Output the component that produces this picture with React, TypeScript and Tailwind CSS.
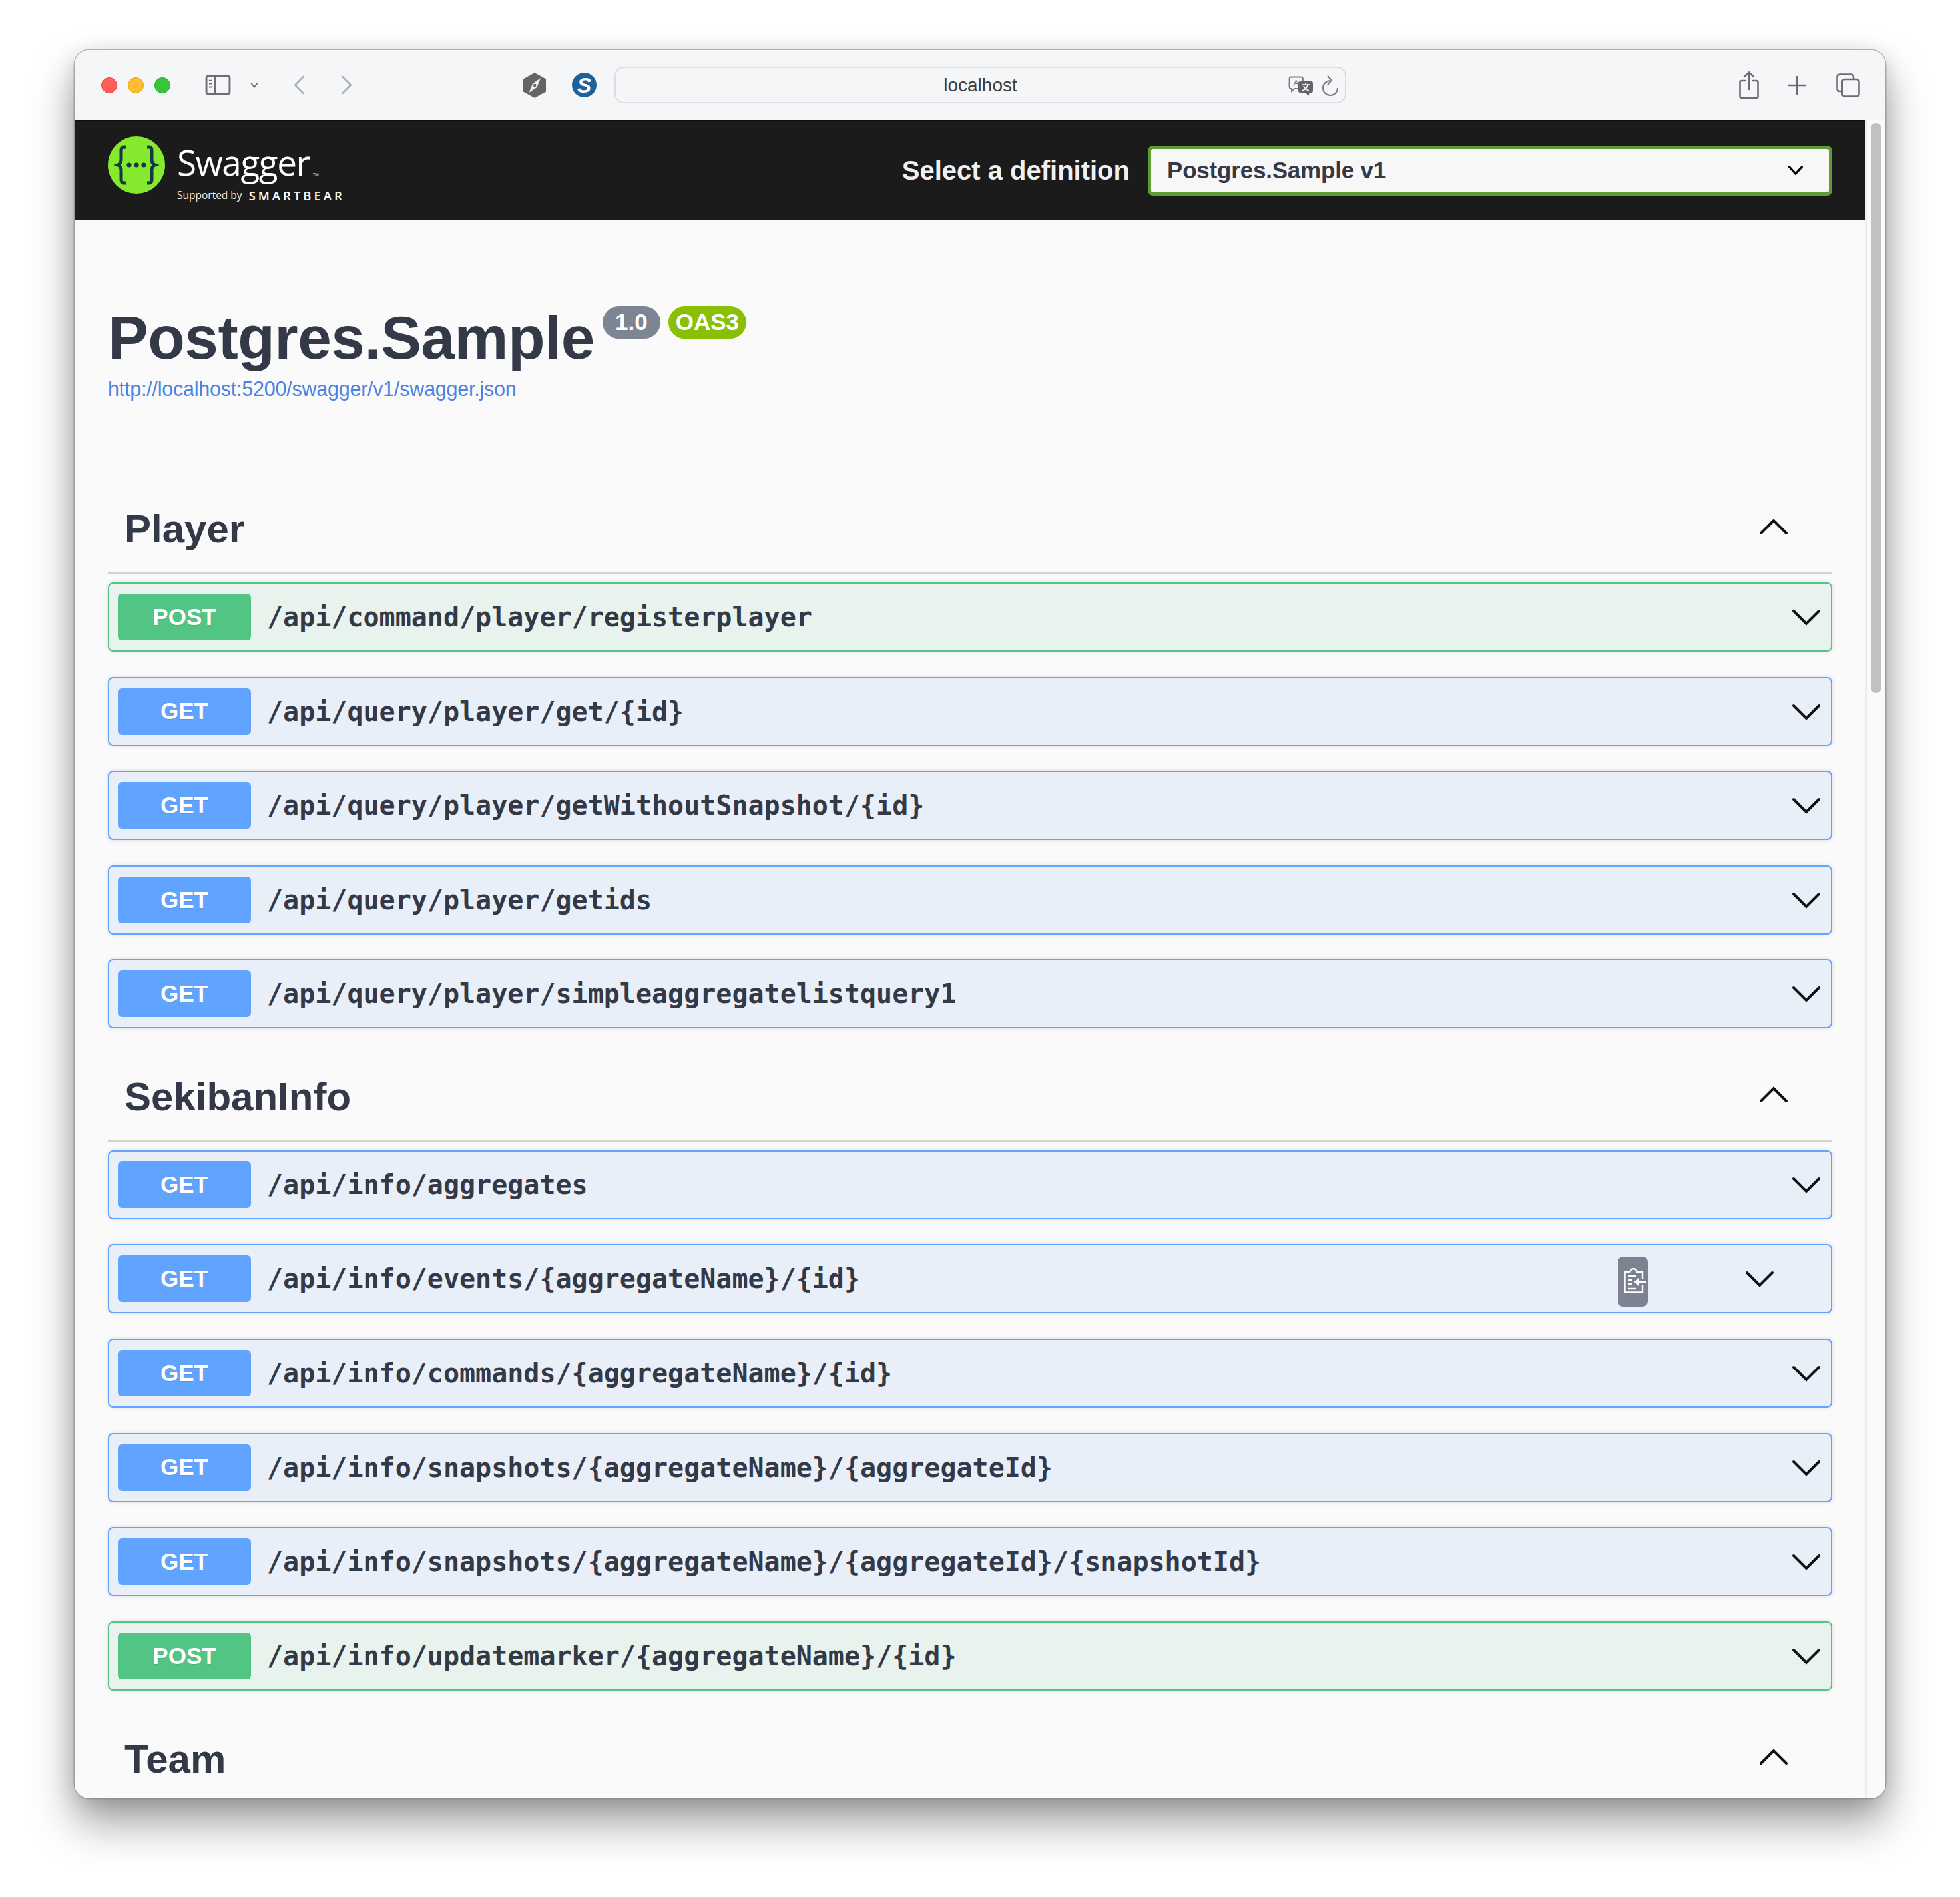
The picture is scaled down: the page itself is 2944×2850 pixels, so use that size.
import React from "react";

type Method = "GET" | "POST";

function Chevron({ className }: { className?: string }) {
  return (
    <svg viewBox="0 0 44 28" className={className} fill="none" stroke="#111" strokeWidth="4" strokeLinecap="round">
      <path d="M3 4 L22 23 L41 4" />
    </svg>
  );
}

function ChevronUp({ className }: { className?: string }) {
  return (
    <svg viewBox="0 0 44 28" className={className} fill="none" stroke="#111" strokeWidth="4" strokeLinecap="round">
      <path d="M3 24 L22 5 L41 24" />
    </svg>
  );
}

function CopyIcon() {
  return (
    <div className="absolute left-[2266px] top-[17px] flex h-[75px] w-[45px] items-center justify-center rounded-[8px] bg-[#7d8293]">
      <svg viewBox="0 0 33 38" className="mb-[3px] ml-[6px] h-[38px] w-[33px] shrink-0" fill="none" stroke="#fff" strokeWidth="2.4">
        <path d="M28 25 V36.5 H1.5 V6 H9 L10.5 3 Q14.5 -1 18.5 3 L20 6 H28 V17" />
        <path d="M6 12 H18 M6 18 H12 M6 24 H12 M6 31 H18" />
        <path d="M33 21 H22" strokeWidth="4" />
        <path d="M23 15 L15.5 21 L23 27 Z" fill="#fff" stroke="none" />
      </svg>
    </div>
  );
}

function Row({ method, path, copy }: { method: Method; path: string; copy?: boolean }) {
  const post = method === "POST";
  return (
    <div
      className={
        "relative flex h-[104px] items-center rounded-[8px] border-2 pl-[13px] shadow-[0_0_6px_rgba(0,0,0,0.13)] " +
        (post ? "border-[#52c584] bg-[#e9f3ee]" : "border-[#60a4ff] bg-[#e8eff9]")
      }
    >
      <div
        className={
          "flex h-[70px] w-[200px] items-center justify-center rounded-[6px] text-[35px] font-bold text-white [text-shadow:0_1px_0_rgba(0,0,0,0.1)] " +
          (post ? "bg-[#52c584]" : "bg-[#60a4ff]")
        }
      >
        {method}
      </div>
      <div className="ml-[24px] font-['DejaVu_Sans_Mono',monospace] text-[40px] font-bold text-[#343947]">{path}</div>
      {copy && <CopyIcon />}
      <Chevron className={"absolute top-[37px] h-[28px] w-[44px] " + (copy ? "right-[85px]" : "right-[15px]")} />
    </div>
  );
}

function Section({ title, rows }: { title: string; rows?: { m: Method; p: string; copy?: boolean }[] }) {
  return (
    <section>
      <div className="flex h-[114px] items-center justify-between border-b-2 border-[#d0d1d5] pb-[18px] pl-[25px] pr-[66px]">
        <h2 className="text-[60px] font-bold leading-none text-[#343947]">{title}</h2>
        <ChevronUp className="mb-[8px] h-[28px] w-[44px]" />
      </div>
      {rows && (
        <div className="mt-[13px] flex flex-col gap-[37.6px]">
          {rows.map((r) => (
            <Row key={r.p} method={r.m} path={r.p} copy={r.copy} />
          ))}
        </div>
      )}
    </section>
  );
}

function Toolbar() {
  return (
    <div className="flex h-[105px] items-center bg-[#f5f6f8] pr-[38px]">
      <div className="ml-[40px] flex gap-[16px]">
        <div className="h-[24px] w-[24px] rounded-full border border-[#e0443e] bg-[#ff5f57]" />
        <div className="h-[24px] w-[24px] rounded-full border border-[#dea123] bg-[#febc2e]" />
        <div className="h-[24px] w-[24px] rounded-full border border-[#1aab29] bg-[#3ac43a]" />
      </div>
      <svg viewBox="0 0 40 32" className="ml-[52px] h-[31px] w-[39px]" fill="none" stroke="#6d6e72" strokeWidth="3">
        <rect x="2" y="2" width="36" height="28" rx="3" />
        <path d="M15 2 V30" />
        <path d="M6 9 H11 M6 14 H11 M6 19 H11" strokeWidth="2" />
      </svg>
      <svg viewBox="0 0 16 12" className="ml-[28px] h-[9px] w-[14px]" fill="none" stroke="#6d6e72" strokeWidth="2.6">
        <path d="M1.5 2 L8 10 L14.5 2" />
      </svg>
      <svg viewBox="0 0 18 30" className="ml-[51px] h-[29px] w-[18px]" fill="none" stroke="#aaadb2" strokeWidth="2.6" strokeLinecap="round">
        <path d="M16 2 L3 15 L16 28" />
      </svg>
      <svg viewBox="0 0 18 30" className="ml-[54px] h-[29px] w-[18px]" fill="none" stroke="#aaadb2" strokeWidth="2.6" strokeLinecap="round">
        <path d="M2 2 L15 15 L2 28" />
      </svg>
      <svg viewBox="0 0 34 38" className="ml-[256px] h-[38px] w-[34px]">
        <path d="M17 0 L34 9.5 V28.5 L17 38 L0 28.5 V9.5 Z" fill="#636466" />
        <path d="M26 8 L20.5 22 L8.5 30 L14 16.5 Z" fill="#eceded" />
        <circle cx="17.2" cy="19" r="2.2" fill="#636466" />
      </svg>
      <div className="ml-[39px] flex h-[37px] w-[37px] items-center justify-center rounded-full bg-[#1c6199] text-[32px] font-bold italic leading-none text-white">
        S
      </div>
      <div className="relative ml-[27px] flex h-[55px] w-[1099px] items-center justify-center rounded-[14px] border-2 border-[#dcdde0] text-[28px] text-[#3c3d40]">
        localhost
        <svg viewBox="0 0 38 30" className="absolute right-[47px] top-[12px] h-[30px] w-[38px]">
          <path d="M4 1.5 H19 Q22 1.5 22 4.5 V16 Q22 19 19 19 H9 L5 23 V19 H4 Q1.5 19 1.5 16 V4.5 Q1.5 1.5 4 1.5 Z" fill="#f5f6f8" stroke="#77787b" strokeWidth="1.8" />
          <text x="11.5" y="14.5" textAnchor="middle" fontSize="13" fill="#77787b" fontFamily="Liberation Sans">A</text>
          <path d="M18 8 H34 Q37 8 37 11 V22 Q37 25 34 25 H32 L30 30 L26 25 H18 Q15 25 15 22 V11 Q15 8 18 8 Z" fill="#636467" />
          <path d="M20 13 H32 M26 10.5 V13 M29 14 Q27 20 21 22 M23 15 Q25 20 31 22" stroke="#fff" strokeWidth="1.7" fill="none" />
        </svg>
        <svg viewBox="0 0 26 32" className="absolute right-[9px] top-[11px] h-[32px] w-[26px]" fill="none" stroke="#77787b" strokeWidth="2">
          <path d="M13 8 A11 11 0 1 0 24 19" />
          <path d="M9 1 L15 7.5 L9 14" />
        </svg>
      </div>
      <div className="flex-1" />
      <svg viewBox="0 0 30 42" className="h-[42px] w-[30px]" fill="none" stroke="#6c6d70" strokeWidth="2.6" strokeLinecap="round">
        <path d="M9 14 H4 Q1.5 14 1.5 16.5 V37.5 Q1.5 40 4 40 H26 Q28.5 40 28.5 37.5 V16.5 Q28.5 14 26 14 H21" />
        <path d="M15 27 V2 M8 8 L15 1.5 L22 8" />
      </svg>
      <svg viewBox="0 0 28 28" className="ml-[43px] h-[28px] w-[28px]" fill="none" stroke="#6c6d70" strokeWidth="2.6" strokeLinecap="round">
        <path d="M14 1 V27 M1 14 H27" />
      </svg>
      <svg viewBox="0 0 36 36" className="ml-[45px] h-[36px] w-[36px]" fill="none" stroke="#6c6d70" strokeWidth="2.6">
        <path d="M8 27 H6 Q1.5 27 1.5 23 V6 Q1.5 1.5 6 1.5 H22 Q26 1.5 26 6 V9" />
        <rect x="9" y="9" width="25.5" height="25.5" rx="4" />
      </svg>
    </div>
  );
}

function Topbar() {
  return (
    <div className="flex h-[150px] items-center border-t-2 border-[#0d0d0d] bg-[#1b1b1b] pl-[50px] pr-[50px]">
      <svg viewBox="0 0 86 86" className="mt-[-16px] h-[86px] w-[86px] shrink-0">
        <circle cx="43" cy="43" r="43" fill="#85ea2d" />
        <path d="M27 16 H24 Q20 16 20 21 V35 Q20 41 15 43 Q20 45 20 51 V65 Q20 70 24 70 H27" fill="none" stroke="#173647" strokeWidth="5" />
        <path d="M59 16 H62 Q66 16 66 21 V35 Q66 41 71 43 Q66 45 66 51 V65 Q66 70 62 70 H59" fill="none" stroke="#173647" strokeWidth="5" />
        <circle cx="32" cy="43" r="3.6" fill="#173647" />
        <circle cx="43" cy="43" r="3.6" fill="#173647" />
        <circle cx="54" cy="43" r="3.6" fill="#173647" />
      </svg>
      <div className="ml-[18px] mt-[2px] flex flex-col font-['Open_Sans',sans-serif] text-white">
        <div className="relative h-[68px] text-[53px] font-normal leading-[68px] tracking-[-1.4px]">
          Swagger
          <span className="absolute bottom-[13px] left-[204px] text-[6px] leading-none tracking-normal">TM</span>
        </div>
        <div className="mt-[6px] flex h-[20px] items-center whitespace-nowrap leading-none">
          <span className="text-[15.5px] text-[#ececec]">Supported by</span>
          <span className="ml-[10px] text-[18.5px] font-semibold tracking-[4px]">SMARTBEAR</span>
        </div>
      </div>
      <div className="flex-1" />
      <div className="mr-[27px] text-[40px] font-bold text-[#f0f0f0]">Select a definition</div>
      <div className="flex h-[75px] w-[1028px] items-center justify-between rounded-[8px] border-[5px] border-[#5f9b37] bg-[#f7f7f7] pl-[24px] pr-[38px]">
        <span className="text-[35px] font-bold tracking-[-0.2px] text-[#343947]">Postgres.Sample v1</span>
        <svg viewBox="0 0 24 16" className="h-[15px] w-[24px]" fill="none" stroke="#000" strokeWidth="3.4" strokeLinecap="round">
          <path d="M2 2 L12 13 L22 2" />
        </svg>
      </div>
    </div>
  );
}

export default function App() {
  return (
    <div className="min-h-[2850px] w-[2944px] bg-white pl-[112px] pt-[75px] font-['Liberation_Sans',sans-serif]">
      <div className="relative h-[2627px] w-[2720px] overflow-hidden rounded-[22px] shadow-[0_0_0_1.5px_rgba(130,130,130,0.55),0_38px_66px_rgba(0,0,0,0.36),0_8px_34px_rgba(0,0,0,0.16)]">
        <Toolbar />
        <div className="flex h-[2522px]">
          <main className="h-full w-[2690px] overflow-hidden bg-[#fafafa]">
            <Topbar />
            <div className="px-[50px]">
              <div className="flex items-start pt-[123px]">
                <h1 className="text-[91px] font-bold leading-[110px] tracking-[-0.5px] text-[#343947]">Postgres.Sample</h1>
                <div className="ml-[12px] mt-[7px] flex h-[49px] w-[87px] items-center justify-center rounded-[25px] bg-[#7d8492] text-[35px] font-bold text-white">1.0</div>
                <div className="ml-[12px] mt-[7px] flex h-[49px] w-[117px] items-center justify-center rounded-[25px] bg-[#89bf04] text-[35px] font-bold text-white">OAS3</div>
              </div>
              <a className="mt-[2px] block text-[30.5px] leading-[38px] tracking-[-0.23px] text-[#4a83e3]">http://localhost:5200/swagger/v1/swagger.json</a>
              <div className="mt-[145px] flex flex-col">
                <Section
                  title="Player"
                  rows={[
                    { m: "POST", p: "/api/command/player/registerplayer" },
                    { m: "GET", p: "/api/query/player/get/{id}" },
                    { m: "GET", p: "/api/query/player/getWithoutSnapshot/{id}" },
                    { m: "GET", p: "/api/query/player/getids" },
                    { m: "GET", p: "/api/query/player/simpleaggregatelistquery1" },
                  ]}
                />
                <div className="h-[55.5px]" />
                <Section
                  title="SekibanInfo"
                  rows={[
                    { m: "GET", p: "/api/info/aggregates" },
                    { m: "GET", p: "/api/info/events/{aggregateName}/{id}", copy: true },
                    { m: "GET", p: "/api/info/commands/{aggregateName}/{id}" },
                    { m: "GET", p: "/api/info/snapshots/{aggregateName}/{aggregateId}" },
                    { m: "GET", p: "/api/info/snapshots/{aggregateName}/{aggregateId}/{snapshotId}" },
                    { m: "POST", p: "/api/info/updatemarker/{aggregateName}/{id}" },
                  ]}
                />
                <div className="h-[56px]" />
                <Section title="Team" />
              </div>
            </div>
          </main>
          <div className="w-[30px] border-l-2 border-[#ececec] bg-[#fafafa] pl-[6px] pt-[5px]">
            <div className="h-[856px] w-[16px] rounded-full bg-[#c1c1c1]" />
          </div>
        </div>
      </div>
    </div>
  );
}
